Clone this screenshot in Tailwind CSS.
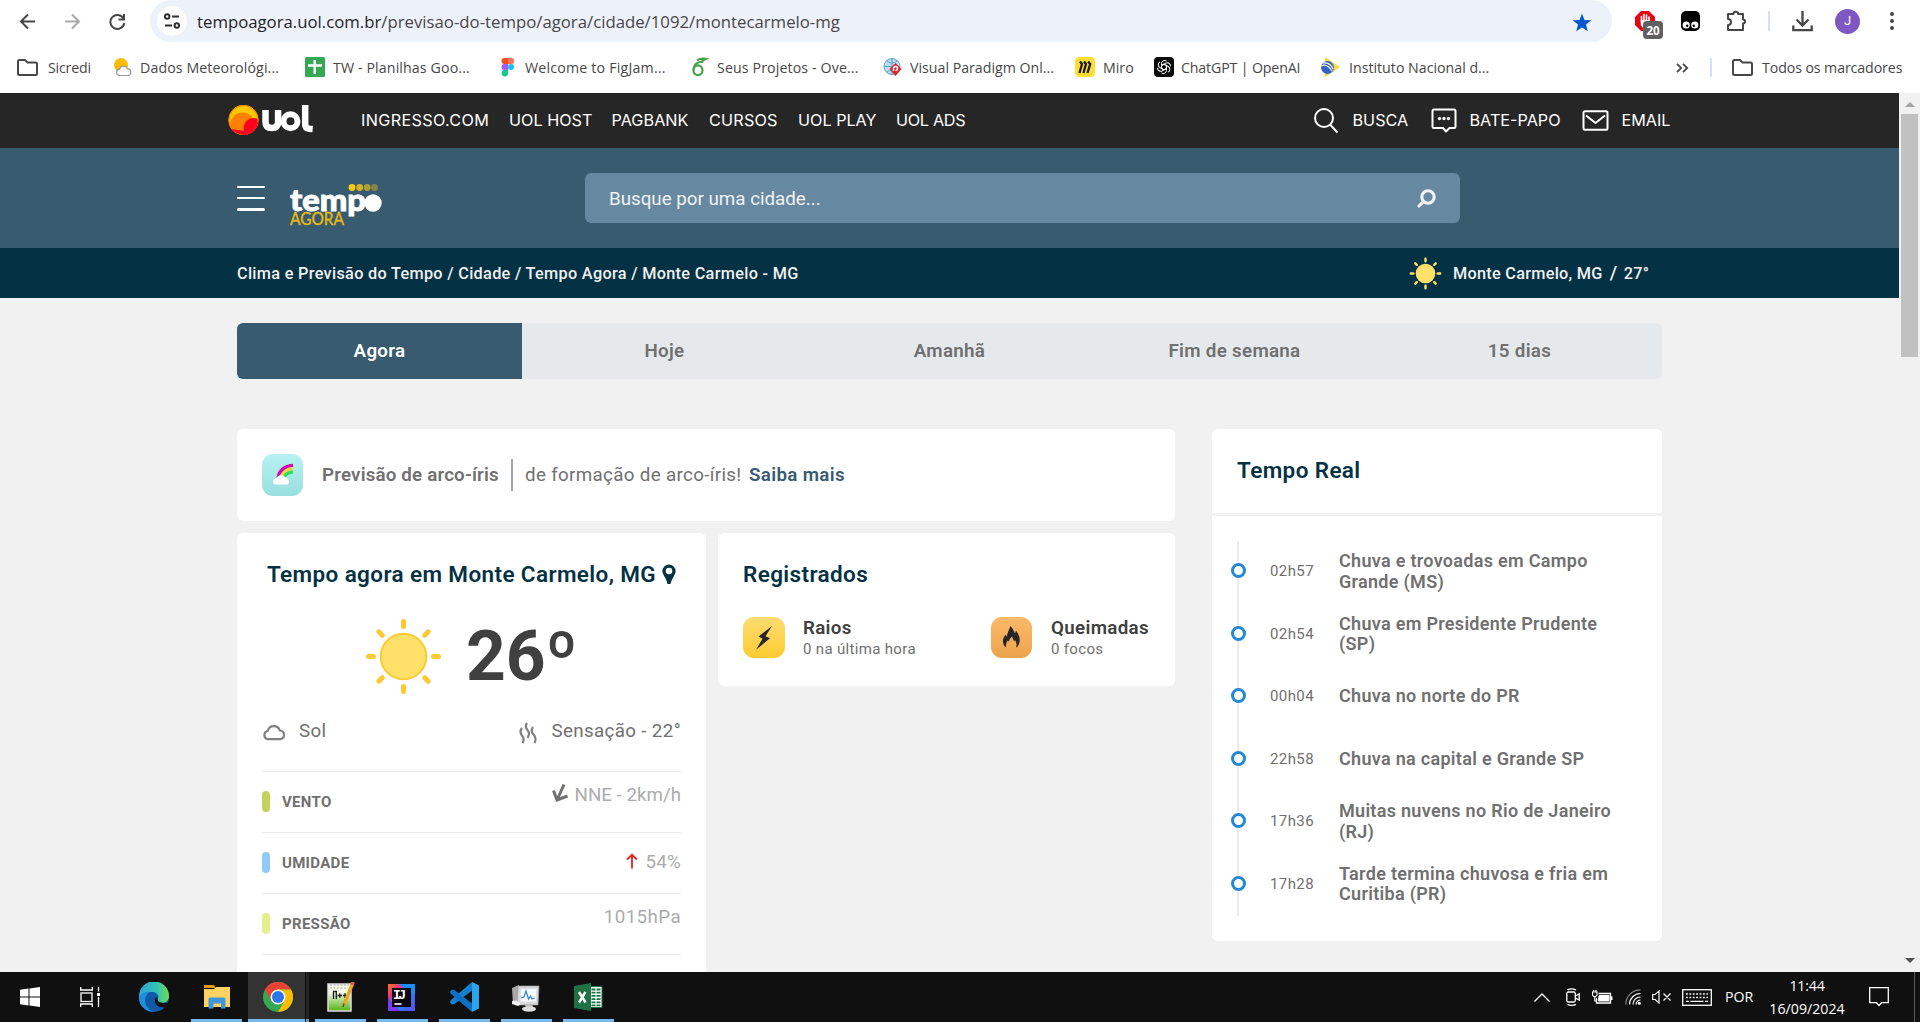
<!DOCTYPE html>
<html lang="pt-BR">
<head>
<meta charset="utf-8">
<title>Tempo Agora - Monte Carmelo</title>
<script src="https://cdn.jsdelivr.net/npm/@tailwindcss/browser@4"></script>
</head>
<body class="w-[1920px] h-[1022px] overflow-hidden bg-white font-['Roboto',sans-serif] flex flex-col">

<!-- Browser toolbar -->
<div class="h-[42px] shrink-0 flex items-start">
  <div class="w-[150px] h-[42px] flex items-center pl-[19px] gap-[28px] text-[#474747]">
    <svg class="w-[17px] h-[17px]" viewBox="0 0 17 17" fill="none" stroke="#474747" stroke-width="2"><path d="M16 8.500H2M9 1.500l-7 7 7 7"/></svg>
    <svg class="w-[17px] h-[17px]" viewBox="0 0 17 17" fill="none" stroke="#a9a9a9" stroke-width="2"><path d="M1 8.500h14M8 1.500l7 7-7 7"/></svg>
    <svg class="w-[17px] h-[17px]" viewBox="0 0 17 17" fill="none" stroke="#474747" stroke-width="2"><path d="M14.500 5.500A7 7 0 1 0 15.300 10M15 1v5.500H9.500"/></svg>
  </div>
  <div class="w-[1462px] h-[42px] rounded-[21px] bg-[#edf1fa] flex items-center pl-[7px] pr-[20px] font-['Open_Sans',sans-serif]">
    <div class="size-[30px] rounded-full bg-white flex items-center justify-center">
      <svg class="w-[16px] h-[16px]" viewBox="0 0 16 16" fill="none" stroke="#303030" stroke-width="2"><circle cx="3.200" cy="3.500" r="2.200"/><path d="M8 3.500h7M1 12.500h7"/><circle cx="12.800" cy="12.500" r="2.200"/></svg>
    </div>
    <div class="ml-[10px] mt-[2px] text-[16.75px] text-[#474747] whitespace-nowrap"><span class="text-[#1f1f1f]">tempoagora.uol.com.br</span>/previsao-do-tempo/agora/cidade/1092/montecarmelo-mg</div>
    <svg class="w-[20px] h-[20px] ml-auto mt-[3px]" viewBox="0 0 20 20" fill="#0b57d0"><path d="M10 .5l2.500 6.400 6.800.4-5.300 4.300 1.800 6.700L10 14.600l-5.800 3.700L6 11.600.7 7.300l6.800-.4z"/></svg>
  </div>
  <div class="flex-1 h-[42px] flex items-center pl-[22px] relative">
    <div class="w-[47px] h-[42px] relative">
      <svg class="w-[30px] h-[30px] mt-[10px]" viewBox="0 0 30 30"><path d="M7 1h8l6 6v8l-6 6H7l-6-6V7z" fill="#e30613"/><path d="M7.500 12V6.500M10 11V4.500M12.500 11V5M15 12V7" stroke="#fff" stroke-width="1.600" stroke-linecap="round"/><path d="M6.800 10h9v5l-3 3.500H9.500L6.800 15z" fill="#fff"/></svg>
      <div class="absolute left-[9px] top-[21px] w-[20px] h-[18px] rounded-[4px] bg-[#606060] text-white text-[11.5px] font-bold leading-[19px] text-center font-['Open_Sans',sans-serif]">20</div>
    </div>
    <svg class="w-[19px] h-[20px]" viewBox="0 0 19 20"><rect width="19" height="20" rx="5"/><circle cx="5.200" cy="14" r="3.600" fill="#fff"/><circle cx="13.800" cy="14" r="3.600" fill="#fff"/><circle cx="6.200" cy="14.800" r="1.200"/><circle cx="12.800" cy="14.800" r="1.200"/></svg>
    <svg class="w-[22px] h-[22px] ml-[26px]" viewBox="0 0 22 22" fill="none" stroke="#474747" stroke-width="2" stroke-linejoin="round"><path d="M2 4h5.500a2.300 2.300 0 0 1 4.600 0H17v5.500a2 2 0 0 1 0 4V20H2v-5a3 3 0 0 0 0-6z"/></svg>
    <div class="w-[2px] h-[20px] bg-[#d0e1fb] ml-[20px]"></div>
    <svg class="w-[21px] h-[21px] ml-[22px]" viewBox="0 0 21 21" fill="none" stroke="#474747" stroke-width="2.300"><path d="M10.500 0v14M4.500 8.500l6 6 6-6M1.300 14.500v4.700h18.400v-4.700"/></svg>
    <div class="size-[25px] rounded-full bg-[#7e57c2] text-white text-[13px] flex items-center justify-center ml-[22px]">J</div>
    <svg class="w-[6px] h-[18px] ml-[29px]" viewBox="0 0 6 18" fill="#474747"><circle cx="3" cy="2" r="2"/><circle cx="3" cy="9" r="2"/><circle cx="3" cy="16" r="2"/></svg>
  </div>
</div>

<!-- Bookmarks bar -->
<div class="h-[51px] shrink-0 flex items-center pl-[17px] font-['Open_Sans',sans-serif] text-[14.2px] text-[#474747] whitespace-nowrap">
  <div class="w-[96px] flex items-center">
    <div class="w-[31px]"><svg class="w-[21px] h-[17px]" viewBox="0 0 21 17" fill="none" stroke="#474747" stroke-width="2"><path d="M1 2.500Q1 1 2.500 1H8l2.500 2.500h8Q20 3.500 20 5v9.500Q20 16 18.500 16h-16Q1 16 1 14.500z"/></svg></div>
    <span class="tracking-[-0.2px]">Sicredi</span>
  </div>
  <div class="w-[192px] flex items-center">
    <div class="w-[27px]"><svg class="w-[20px] h-[20px]" viewBox="0 0 20 20"><circle cx="8" cy="8" r="7" fill="#fbbc04"/><path d="M6 18.500a3.200 3.200 0 0 1 .5-6.300 4.300 4.300 0 0 1 8-.5 3.500 3.500 0 0 1 1 6.800z" fill="#fff" stroke="#9a9a9a" stroke-width="1.200"/></svg></div>
    <span class="tracking-[0.1px]">Dados Meteorológi...</span>
  </div>
  <div class="w-[195px] flex items-center">
    <div class="w-[28px]"><svg class="w-[20px] h-[20px]" viewBox="0 0 20 20"><rect width="20" height="20" rx="1.500" fill="#34a853"/><path d="M9.700 3v14M3 8.500h14" stroke="#fff" stroke-width="2.400"/></svg></div>
    <span class="tracking-[0.12px]">TW - Planilhas Goo...</span>
  </div>
  <div class="w-[190px] flex items-center">
    <div class="w-[25px]"><svg class="w-[15px] h-[20px]" viewBox="0 0 15 20"><path d="M4.500 1H8v6H4.500a3 3 0 0 1 0-6z" fill="#f24e1e"/><path d="M8 1h3.200a3 3 0 0 1 0 6H8z" fill="#ff7262"/><path d="M4.500 7H8v6H4.500a3 3 0 0 1 0-6z" fill="#a259ff"/><circle cx="11" cy="10" r="3" fill="#1abcfe"/><path d="M4.500 13H8v3.500a3.200 3.200 0 1 1-3.500-3.500z" fill="#0acf83"/></svg></div>
    <span class="tracking-[0.2px]">Welcome to FigJam...</span>
  </div>
  <div class="w-[193px] flex items-center">
    <div class="w-[27px]"><svg class="w-[20px] h-[20px]" viewBox="0 0 20 20" fill="none" stroke="#46a247" stroke-width="2.200"><ellipse cx="8" cy="13.200" rx="4.500" ry="4.900"/><path d="M3.500 13C3.500 7.500 7 5 12.500 4.500M7 3.200q4-2 8.500-1.300Q12.500 3 11.500 6"/></svg></div>
    <span class="tracking-[0.12px]">Seus Projetos - Ove...</span>
  </div>
  <div class="w-[192px] flex items-center">
    <div class="w-[27px]"><svg class="w-[20px] h-[20px]" viewBox="0 0 20 20"><circle cx="9" cy="9.500" r="8" fill="#b9deef" stroke="#6b9db8"/><path d="M1.500 9.500h15M9 1.500v16M4 4q5 4 10 0M4 15q5-4 10 0" stroke="#5b9fc4" fill="none"/><path d="M12.500 6l6 6-6 7-6-7z" fill="#d8232a"/><path d="M10.500 14v-2.500a2 2 0 1 1 2 2" stroke="#fff" stroke-width="1.500" fill="none"/></svg></div>
    <span>Visual Paradigm Onl...</span>
  </div>
  <div class="w-[79px] flex items-center">
    <div class="w-[28px]"><svg class="w-[20px] h-[20px]" viewBox="0 0 20 20"><rect width="20" height="20" rx="4.500" fill="#ffdd33"/><path d="M5 4.500l2 2.500-2.500 9M9 4.500l2 2.500-2.500 9M13 4.500L15.200 7l-2.700 9" stroke="#1c1c1e" stroke-width="2.300" fill="none"/></svg></div>
    <span>Miro</span>
  </div>
  <div class="w-[166px] flex items-center">
    <div class="w-[27px]"><svg class="w-[20px] h-[20px]" viewBox="0 0 20 20"><rect width="20" height="20" rx="4" fill="#0a0a0a"/><g fill="none" stroke="#fff" stroke-width="1"><path d="M10 7.200l2.500 1.400v4.800a3.200 3.200 0 0 1-5 2.600"/><path d="M10 7.200l2.500 1.400v4.800a3.200 3.200 0 0 1-5 2.600" transform="rotate(60 10 10)"/><path d="M10 7.200l2.500 1.400v4.800a3.200 3.200 0 0 1-5 2.600" transform="rotate(120 10 10)"/><path d="M10 7.200l2.500 1.400v4.800a3.200 3.200 0 0 1-5 2.600" transform="rotate(180 10 10)"/><path d="M10 7.200l2.500 1.400v4.800a3.200 3.200 0 0 1-5 2.600" transform="rotate(240 10 10)"/><path d="M10 7.200l2.500 1.400v4.800a3.200 3.200 0 0 1-5 2.600" transform="rotate(300 10 10)"/></g></svg></div>
    <span class="tracking-[-0.15px]">ChatGPT | OpenAI</span>
  </div>
  <div class="w-[200px] flex items-center">
    <div class="w-[29px]"><svg class="w-[20px] h-[20px]" viewBox="0 0 20 20"><path d="M5 0l15 10L5 20z" fill="#fbd935"/><circle cx="7.500" cy="10.500" r="6.500" fill="#3a62c4"/><path d="M1 9q6-3 11 5M3 6q7-1 10 6" stroke="#fff" fill="none" stroke-width="1.100"/></svg></div>
    <span>Instituto Nacional d...</span>
  </div>
  <svg class="w-[13px] h-[10px] ml-[156px]" viewBox="0 0 13 10" fill="none" stroke="#474747" stroke-width="1.800"><path d="M1 .8L5.200 5 1 9.200M7 .8L11.200 5 7 9.200"/></svg>
  <div class="w-[2px] h-[19px] bg-[#d0e1fb] ml-[21px]"></div>
  <svg class="w-[21px] h-[17px] ml-[20px] mr-[9px]" viewBox="0 0 21 17" fill="none" stroke="#474747" stroke-width="2"><path d="M1 2.500Q1 1 2.500 1H8l2.500 2.500h8Q20 3.500 20 5v9.500Q20 16 18.500 16h-16Q1 16 1 14.500z"/></svg>
  <span class="tracking-[-0.1px]">Todos os marcadores</span>
</div>

<!-- Page viewport -->
<div class="h-[879px] shrink-0 flex">
  <div class="w-[1899px] bg-[#f1f1f1] flex flex-col overflow-hidden">

    <!-- UOL bar -->
    <div class="h-[55px] shrink-0 bg-[#262626] flex items-center pl-[228px] text-white font-['Inter',sans-serif] text-[16.2px]">
      <svg class="w-[88px] h-[34px] -mt-[2px]" viewBox="0 0 88 34">
        <defs><clipPath id="ball"><circle cx="15.500" cy="17" r="15"/></clipPath></defs>
        <g clip-path="url(#ball)"><rect width="32" height="34" fill="#ffc800"/><circle cx="14.500" cy="22" r="12.500" fill="#ff8000"/><circle cx="25.500" cy="25" r="10" fill="#ff0021"/></g><circle cx="15.500" cy="17" r="14.500" fill="none" stroke="#ff8000" stroke-width="1"/><path d="M29.800 19A14.500 14.500 0 0 1 17 31.400" fill="none" stroke="#ff0021" stroke-width="1.200"/><path d="M3 26Q8 31.500 18 32l-.5-4z" fill="#ff0021"/>
        <path d="M37.500 7v11.500q0 6.500 6.300 6.500t6.300-6.500V7" fill="none" stroke="#fff" stroke-width="6.500"/><circle cx="62.500" cy="18.200" r="7" fill="none" stroke="#fff" stroke-width="6"/><path d="M77.200 2v19.500q0 3.700 4 4.200l3.500.3" fill="none" stroke="#fff" stroke-width="6.500"/>
      </svg>
      <div class="flex items-center ml-[45px] h-[55px] whitespace-nowrap">
        <span class="w-[148px] tracking-[0.35px]">INGRESSO.COM</span><span class="w-[102.5px]">UOL HOST</span><span class="w-[97.500px] tracking-[0.05px]">PAGBANK</span><span class="w-[89px] tracking-[0.2px]">CURSOS</span><span class="w-[98px]">UOL PLAY</span><span class="w-[80.5px] tracking-[-0.3px]">UOL ADS</span>
      </div>
      <svg class="w-[26px] h-[26px] ml-[336px]" viewBox="0 0 26 26" fill="none" stroke="#fff" stroke-width="2"><circle cx="11" cy="10" r="9"/><path d="M17 16.500l7.500 8"/></svg>
      <span class="w-[78px] ml-[14px]">BUSCA</span>
      <svg class="w-[26px] h-[25px]" viewBox="0 0 26 25" fill="none" stroke="#fff" stroke-width="2" stroke-linejoin="round"><path d="M3 1.500h20q1.500 0 1.500 1.500v15.500q0 1.500-1.500 1.500h-4.500L15 23.500 12 20H3q-1.500 0-1.500-1.500V3Q1.500 1.500 3 1.500z"/><g fill="#fff" stroke="none"><circle cx="8.500" cy="10.500" r="1.700"/><circle cx="13" cy="10.500" r="1.700"/><circle cx="17.500" cy="10.500" r="1.700"/></g></svg>
      <span class="w-[112px] ml-[13px] whitespace-nowrap">BATE-PAPO</span>
      <svg class="w-[27px] h-[21px]" viewBox="0 0 27 21" fill="none" stroke="#fff" stroke-width="2" stroke-linejoin="round"><rect x="1.500" y="1.200" width="24" height="18.600" rx="1.500"/><path d="M4 5.500l9.500 7.500L23 5.500"/></svg>
      <span class="ml-[13px]">EMAIL</span>
    </div>

    <!-- Site header -->
    <div class="h-[100px] shrink-0 bg-[#385b70] flex items-center pl-[237px]">
      <div class="w-[28px] flex flex-col gap-[9px]"><div class="h-[2px] bg-white rounded"></div><div class="h-[2px] bg-white rounded"></div><div class="h-[3px] bg-white rounded"></div></div>
      <svg class="w-[94px] h-[46px] ml-[25px] mt-[13px]" viewBox="0 0 94 46">
        <circle cx="62" cy="5.500" r="3.400" fill="#fdc90d"/><circle cx="69.700" cy="5.500" r="3.400" fill="#fdc90d" opacity=".8"/><circle cx="77.200" cy="5.500" r="3.400" fill="#fdc90d" opacity=".6"/><circle cx="84.500" cy="5.500" r="3.400" fill="#fdc90d" opacity=".4"/>
        <text x="0" y="29" textLength="76" lengthAdjust="spacingAndGlyphs" fill="#fff" stroke="#fff" stroke-width=".9" font-family="Lato" font-weight="900" font-size="31">temp</text><circle cx="83" cy="21" r="8.700" fill="#fff"/>
        <text x="0" y="43" textLength="54" lengthAdjust="spacingAndGlyphs" fill="#e9bb14" stroke="#e9bb14" stroke-width=".35" font-family="Lato" font-weight="400" font-size="16.500">AGORA</text>
      </svg>
      <div class="w-[875px] h-[50px] ml-[201px] rounded-[6px] bg-[#6689a1] flex items-center justify-between pl-[24px] pr-[24px] text-[18.75px] text-[#f1f1f1]">
        <span class="mt-[2px]">Busque por uma cidade...</span>
        <svg class="w-[19px] h-[19px]" viewBox="0 0 19 19" fill="none" stroke="#f1f1f1" stroke-width="3.100" stroke-linecap="round"><circle cx="11" cy="8" r="6.200"/><path d="M6.200 12.800L2 17"/></svg>
      </div>
    </div>

    <!-- Breadcrumb -->
    <div class="h-[50px] pt-[2px] shrink-0 bg-[#043244] flex items-center pl-[237px] text-[16.25px] tracking-[0.31px] font-medium text-[#f1f1f1] whitespace-nowrap">
      <span class="w-[1172px]">Clima e Previsão do Tempo / Cidade / Tempo Agora / Monte Carmelo - MG</span>
      <svg class="w-[33px] h-[33px] -mt-[2px]" viewBox="0 0 33 33" stroke="#ffe16a" stroke-width="2.400" stroke-linecap="round"><circle cx="16.500" cy="16.500" r="9.800" fill="#ffe16a" stroke="none"/><path d="M16.500 1.800v2.500M16.500 28.700v2.500M1.800 16.500h2.500M28.700 16.500h2.500M6.300 6.300l1.500 1.500M25.200 25.200l1.500 1.500M6.300 26.700l1.500-1.500M25.200 7.800l1.500-1.500"/></svg>
      <span class="ml-[11px] tracking-[0.28px]">Monte Carmelo, MG</span><span class="ml-[7px] w-[14px] text-[19px] -mt-[2px]">/</span><span>27°</span>
    </div>

    <!-- Tabs -->
    <div class="mt-[25px] ml-[237px] w-[1425px] h-[56px] shrink-0 rounded-[6px] overflow-hidden bg-[#e5e9ec] grid grid-cols-5 text-[18.75px] tracking-[0.3px] font-semibold text-[#707070] text-center leading-[56px]">
      <div class="bg-[#385b70] text-white">Agora</div><div>Hoje</div><div>Amanhã</div><div>Fim de semana</div><div>15 dias</div>
    </div>

    <div class="mt-[50px] ml-[237px] flex gap-[37px] items-start">
      <!-- Left column -->
      <div class="w-[938px]">
        <div class="h-[92px] bg-white rounded-[6px] flex items-center pl-[25px] text-[18.75px] text-[#707070] whitespace-nowrap">
          <svg class="w-[41px] h-[42px]" viewBox="0 0 41 42"><defs><linearGradient id="g1" x1="0" y1="0" x2="0" y2="1"><stop stop-color="#b8f1f1"/><stop offset="1" stop-color="#98dfdf"/></linearGradient></defs><rect width="41" height="42" rx="11" fill="url(#g1)"/><g fill="none" stroke-width="3.200"><path d="M16 23.500q2-11 15-12.200" stroke="#d006b0"/><path d="M19.200 23.500q2-8 11.800-8.900" stroke="#f4d441"/><path d="M22 23.500q2-5 9-5.600" stroke="#2fdf5a"/></g><path d="M13 30.500a3.300 3.300 0 0 1 1.500-6.300 5 5 0 0 1 9-.7 4.300 4.300 0 0 1 2.500 7z" fill="#fff"/></svg>
          <span class="w-[178px] ml-[19px] font-semibold tracking-[0.17px]">Previsão de arco-íris</span>
          <div class="w-[2px] h-[32px] bg-[#a5a5a5] ml-[11px]"></div>
          <span class="w-[216px] ml-[12px] tracking-[0.34px]">de formação de arco-íris!</span>
          <span class="ml-[8px] tracking-[0.34px] font-semibold text-[#385b70]">Saiba mais</span>
        </div>
        <div class="flex gap-[12px] mt-[12px] items-start">
          <!-- Current conditions -->
          <div class="w-[469px] h-[460px] bg-white rounded-[6px] px-[25px] pt-[24px]">
            <div class="h-[36px] flex items-center justify-center gap-[6px] text-[22.5px] tracking-[0.38px] font-semibold text-[#043244] whitespace-nowrap">Tempo agora em Monte Carmelo, MG
              <svg class="w-[14px] h-[21px] -mt-[2px]" viewBox="0 0 14 21"><path fill="#043244" fill-rule="evenodd" d="M7 .5a6.600 6.600 0 0 1 6.600 6.600C13.600 11 10 14 8.500 20h-3C4.500 14 .4 11 .4 7.100A6.600 6.600 0 0 1 7 .5zm0 3.200a3.300 3.300 0 1 0 0 6.600 3.300 3.300 0 0 0 0-6.600z"/></svg>
            </div>
            <div class="h-[100px] mt-[13px] flex items-center pl-[103px]">
              <svg class="w-[77px] h-[77px]" viewBox="0 0 77 77" stroke="#ffc933" stroke-width="5" stroke-linecap="round"><circle cx="38.500" cy="38.500" r="22.800" fill="#ffe16a" stroke-width="2"/><path d="M38.500 3.500v5M38.500 68.500v5M3.500 38.500h5M68.500 38.500h5M13.800 13.800l3.500 3.500M59.700 59.700l3.500 3.500M13.800 63.200l3.500-3.500M59.700 17.300l3.500-3.500"/></svg>
              <span class="ml-[24px] mt-[2px] text-[69.500px] leading-[80px] font-bold text-[#404040]">26º</span>
            </div>
            <div class="flex items-center h-[44px] mt-[3px] text-[18.75px] tracking-[0.35px] text-[#707070]">
              <svg class="w-[24px] h-[17px] mt-[3px]" viewBox="0 0 24 17" fill="none" stroke="#808080" stroke-width="2.200"><path d="M5.500 15.200a4.400 4.400 0 0 1 .3-8.500 6.300 6.300 0 0 1 12-.2 4.400 4.400 0 0 1 .7 8.700z"/></svg>
              <span class="ml-[13px]">Sol</span>
              <svg class="w-[18px] h-[22px] ml-auto mt-[3px]" viewBox="0 0 18 22" fill="none" stroke="#808080" stroke-width="2.200"><path d="M3 6q-3 4 0 7.500T3.500 21M8 1q-2.500 3.500 .5 7t0 8M14 5q-3 4 .5 7.500T15.500 21"/></svg>
              <span class="ml-[15px]">Sensação - 22°</span>
            </div>
            <div class="mt-[18px] h-[61px] border-t border-[#ececec] flex items-start text-[#707070]">
              <div class="w-[8px] h-[21px] rounded-[4px] bg-[#c4d25e] mt-[19px]"></div>
              <span class="ml-[12px] mt-[19px] text-[15px] leading-[22px] font-bold tracking-[0.3px]">VENTO</span>
              <svg class="w-[18px] h-[20px] ml-auto mt-[11px]" viewBox="0 0 18 20" fill="none" stroke="#707070" stroke-width="3"><path d="M13 1.500L6.500 16M2.500 7.500L6 17l10.500-4"/></svg>
              <span class="ml-[6px] mt-[11px] text-[18.75px] leading-[24px] text-[#acacac]">NNE - 2km/h</span>
            </div>
            <div class="h-[61px] border-t border-[#ececec] flex items-start text-[#707070]">
              <div class="w-[8px] h-[21px] rounded-[4px] bg-[#90caf6] mt-[19px]"></div>
              <span class="ml-[12px] mt-[19px] text-[15px] leading-[22px] font-bold tracking-[0.3px]">UMIDADE</span>
              <svg class="w-[12px] h-[16px] ml-auto mt-[20px]" viewBox="0 0 12 16" fill="none" stroke="#e8201c" stroke-width="1.800"><path d="M6 15.500V2M1.200 6.500L6 1.700l4.800 4.800"/></svg>
              <span class="ml-[8px] mt-[17px] text-[18.75px] leading-[24px] tracking-[0.2px] text-[#acacac]">54%</span>
            </div>
            <div class="h-[61px] border-t border-[#ececec] flex items-start text-[#707070]">
              <div class="w-[8px] h-[21px] rounded-[4px] bg-[#e4f08c] mt-[19px]"></div>
              <span class="ml-[12px] mt-[19px] text-[15px] leading-[22px] font-bold tracking-[0.3px]">PRESSÃO</span>
              <span class="ml-auto mt-[11px] text-[18.75px] leading-[24px] tracking-[0.4px] text-[#acacac]">1015hPa</span>
            </div>
            <div class="h-[61px] border-t border-[#ececec]"></div>
          </div>
          <!-- Registered events -->
          <div class="w-[457px] h-[153px] bg-white rounded-[6px] px-[25px] pt-[24px]">
            <div class="h-[36px] flex items-center text-[22.5px] tracking-[0.38px] font-semibold text-[#043244]">Registrados</div>
            <div class="flex mt-[23px] whitespace-nowrap">
              <svg class="w-[42px] h-[42px]" viewBox="0 0 42 42"><defs><linearGradient id="g2" x1="0" y1="0" x2="0" y2="1"><stop stop-color="#fedc73"/><stop offset="1" stop-color="#ffcb30"/></linearGradient></defs><rect y="1" width="42" height="41" rx="11" fill="url(#g2)"/><path d="M29 10L15.500 20.500l4 2.200-6.500 11L27 22.200l-4.500-2z" fill="#262626"/></svg>
              <div class="ml-[18px] mt-[1px] w-[188px]"><div class="text-[18.75px] leading-[22px] font-semibold tracking-[0.3px] text-[#404040]">Raios</div><div class="text-[15px] leading-[20px] tracking-[0.33px] text-[#707070]">0 na última hora</div></div>
              <svg class="w-[41px] h-[42px]" viewBox="0 0 41 42"><defs><linearGradient id="g3" x1="0" y1="0" x2="0" y2="1"><stop stop-color="#fdb96a"/><stop offset="1" stop-color="#eba44c"/></linearGradient></defs><rect y="1" width="41" height="41" rx="11" fill="url(#g3)"/><path d="M15 31.500q-4.500-3.500-2.500-9.500l2-3.500.8 2.500Q17.500 14.500 19.500 10q3 3 4.500 7.500l1-3q5 7 3.300 12.500Q27.500 30.500 25 31.500q1.500-4-1-7.500l-1 1.500-2-5q-3 2.500-3 5l-1.300-1Q14.500 27.500 15 31.500z" fill="#262626"/></svg>
              <div class="ml-[19px] mt-[1px]"><div class="text-[18.75px] leading-[22px] font-semibold tracking-[0.33px] text-[#404040]">Queimadas</div><div class="text-[15px] leading-[20px] tracking-[0.33px] text-[#707070]">0 focos</div></div>
            </div>
          </div>
        </div>
      </div>

      <!-- Real-time news -->
      <div class="w-[450px] h-[512px] bg-white rounded-[6px]">
        <div class="h-[87px] border-b-[3px] border-[#f1f1f1] pl-[25px] flex items-center text-[22.5px] tracking-[0.38px] font-semibold text-[#043244]">Tempo Real</div>
        <div class="mt-[25px] ml-[25px] h-[375px] border-l-2 border-[#ececec] grid grid-rows-6 text-[18px] leading-[20.600px] tracking-[0.3px] font-semibold text-[#707070]">
          <div class="flex items-center pb-[1px]"><div class="size-[15px] rounded-full border-[3px] border-[#2389d6] bg-white -ml-[8px] -mt-[2px]"></div><span class="w-[69px] ml-[24px] text-[15px] tracking-[0.4px] font-normal">02h57</span><span class="w-[290px]">Chuva e trovoadas em Campo<br>Grande (MS)</span></div>
          <div class="flex items-center pb-[1px]"><div class="size-[15px] rounded-full border-[3px] border-[#2389d6] bg-white -ml-[8px] -mt-[2px]"></div><span class="w-[69px] ml-[24px] text-[15px] tracking-[0.4px] font-normal">02h54</span><span class="w-[290px]">Chuva em Presidente Prudente<br>(SP)</span></div>
          <div class="flex items-center pb-[1px]"><div class="size-[15px] rounded-full border-[3px] border-[#2389d6] bg-white -ml-[8px] -mt-[2px]"></div><span class="w-[69px] ml-[24px] text-[15px] tracking-[0.4px] font-normal">00h04</span><span class="w-[290px]">Chuva no norte do PR</span></div>
          <div class="flex items-center pb-[1px]"><div class="size-[15px] rounded-full border-[3px] border-[#2389d6] bg-white -ml-[8px] -mt-[2px]"></div><span class="w-[69px] ml-[24px] text-[15px] tracking-[0.4px] font-normal">22h58</span><span class="w-[290px]">Chuva na capital e Grande SP</span></div>
          <div class="flex items-center pb-[1px]"><div class="size-[15px] rounded-full border-[3px] border-[#2389d6] bg-white -ml-[8px] -mt-[2px]"></div><span class="w-[69px] ml-[24px] text-[15px] tracking-[0.4px] font-normal">17h36</span><span class="w-[290px]">Muitas nuvens no Rio de Janeiro<br>(RJ)</span></div>
          <div class="flex items-center pb-[1px]"><div class="size-[15px] rounded-full border-[3px] border-[#2389d6] bg-white -ml-[8px] -mt-[2px]"></div><span class="w-[69px] ml-[24px] text-[15px] tracking-[0.4px] font-normal">17h28</span><span class="w-[290px]">Tarde termina chuvosa e fria em<br>Curitiba (PR)</span></div>
        </div>
      </div>
    </div>
  </div>

  <!-- Scrollbar -->
  <div class="w-[21px] bg-[#f1f1f1] flex flex-col items-center">
    <svg class="w-[10px] h-[5px] mt-[9px]" viewBox="0 0 10 5" fill="#a3a3a3"><path d="M0 5l5-5 5 5z"/></svg>
    <div class="w-[17px] h-[243px] mt-[7px] bg-[#c1c1c1]"></div>
    <svg class="w-[10px] h-[5px] mt-auto mb-[9px]" viewBox="0 0 10 5" fill="#505050"><path d="M0 0l5 5 5-5z"/></svg>
  </div>
</div>

<!-- Taskbar -->
<div class="h-[50px] shrink-0 bg-[#101010] flex items-stretch text-white">
  <div class="w-[60px] flex items-center justify-center"><svg class="w-[20px] h-[20px]" viewBox="0 0 20 20" fill="#fff"><path d="M0 2.800L8.500 1.600V9.500H0zM9.500 1.500L20 0v9.500H9.500zM0 10.500h8.500v7.900L0 17.200zM9.500 10.500H20V20L9.500 18.500z"/></svg></div>
  <div class="w-[60px] flex items-center justify-center"><svg class="w-[20px] h-[20px]" viewBox="0 0 20 20" fill="none" stroke="#fff" stroke-width="1.300"><rect x="1" y="6" width="11" height="8.500"/><path d="M.7 0v3h11.600V0M.7 20v-3h11.600v3M18.500 0v4.500M18.500 10v10"/><path d="M17 6h3v3h-3z" fill="#fff" stroke="none"/></svg></div>
  <div class="w-[68px] flex items-center justify-center"><svg class="w-[30px] h-[30px]" viewBox="0 0 30 30"><defs><linearGradient id="e1" x1="0" y1=".3" x2="1" y2=".3"><stop stop-color="#2aa4dd"/><stop offset=".6" stop-color="#33c3b3"/><stop offset="1" stop-color="#6fdb55"/></linearGradient></defs><circle cx="15" cy="15" r="15" fill="#0f5aa8"/><path d="M0 14A15 15 0 0 1 30 14.500c0 4-3.500 6.500-7 6.500-4 0-6-1.500-4.500-3.500 2.500-4-1-7.500-5.500-7.500C6 10 1.500 12.500 0 17z" fill="url(#e1)"/><path d="M0 16C1 12 5.500 9.500 11 9.800 7 12 5 17 6.500 21.500 8 26.500 12 29.500 16 30 7 30.500 0 24 0 16z" fill="#1d8fdc"/><path d="M18.500 17.500q0 3.500 9.500 3.500l2-2v5l-2.500 1.500q-4 .5-8-1-4-2.500-3.500-7 0-1.500 1.500-2.500 1.500 1 1 2.500z" fill="#101010"/></svg></div>
  <div class="w-[57px] flex flex-col items-center"><div class="h-[47px] flex items-center pt-[3px]"><svg class="w-[26px] h-[24px]" viewBox="0 0 26 24"><path d="M0 0h10l1.500 3H0z" fill="#e09a0e"/><path d="M0 4h10l2-2h14v20H0z" fill="#ffd262"/><path d="M4.500 23.500V14q0-1.500 1.500-1.500h14q1.500 0 1.500 1.500v9.500h-4.500v-5h-7.500v5z" fill="#3f97dd"/></svg></div><div class="w-[51px] h-[3px] bg-[#76b9ed]"></div></div>
  <div class="w-[57px] ml-[3px] bg-[#333] flex flex-col"><div class="h-[47px] pt-[3px] pl-[3px] flex items-center justify-center"><svg class="w-[30px] h-[30px]" viewBox="0 0 30 30"><circle cx="15" cy="15" r="15" fill="#34a853"/><path d="M2 7.500A15 15 0 0 1 28 7.500H15L8.500 18.700z" fill="#ea4335"/><path d="M28 7.500A15 15 0 0 1 15 30l6.500-11.200L15 7.500z" fill="#fbbc05"/><circle cx="15" cy="15" r="7.500" fill="#fff"/><circle cx="15" cy="15" r="6" fill="#2a77ea"/></svg></div><div class="h-[3px] bg-[#76b9ed]"></div></div>
  <div class="w-[4px] bg-[#242424] flex flex-col justify-end border-l border-[#101010]"><div class="h-[3px] bg-[#649cc8]"></div></div>
  <div class="w-[51px] ml-[6px] flex flex-col"><div class="h-[47px] pt-[3px] flex items-center justify-center"><svg class="w-[28px] h-[30px]" viewBox="0 0 28 30"><defs><linearGradient id="n1" x1="0" y1="0" x2="0" y2="1"><stop offset=".3" stop-color="#f6fbe9"/><stop offset="1" stop-color="#52b110"/></linearGradient></defs><path d="M1 2h23v27H1z" fill="url(#n1)" stroke="#ddd" stroke-width="1.500"/><path d="M3 3h19M3 6h17" stroke="#aaa" stroke-dasharray="2 1.500"/><path d="M6.500 17V9.500h2.800V17M10.500 13.500h4.500M12.800 11.300v4.500M15.800 13.500h4.500M18 11.300v4.500" stroke="#222" stroke-width="1.400" fill="none"/><path d="M25.500 1.500L17 23" stroke="#e9a52c" stroke-width="3.500"/><path d="M26.200 0l-1 3" stroke="#d56060" stroke-width="3.500"/><path d="M17 21.500l-1 3.500" stroke="#553" stroke-width="1.500"/></svg></div><div class="h-[3px] bg-[#76b9ed]"></div></div>
  <div class="w-[51px] ml-[11px] flex flex-col"><div class="h-[47px] pt-[3px] pr-[2px] flex items-center justify-center"><svg class="w-[27px] h-[27px]" viewBox="0 0 27 27"><defs><linearGradient id="j1" x1="0" y1="0" x2="1" y2="1"><stop stop-color="#ff7a1a"/><stop offset=".25" stop-color="#f0307c"/><stop offset=".5" stop-color="#1e88f5"/><stop offset="1" stop-color="#5c4ff0"/></linearGradient></defs><rect width="27" height="27" fill="url(#j1)"/><path d="M10 0h17v10z" fill="#1a8cf8"/><path d="M0 14v13h12z" fill="#7a3cf0"/><rect x="4" y="4" width="19" height="19" fill="#090410"/><path d="M6.500 20h7" stroke="#fff" stroke-width="1.600"/><text x="5" y="14.500" font-family="Liberation Mono" font-weight="700" font-size="13" fill="#fff" textLength="13">IJ</text></svg></div><div class="h-[3px] bg-[#76b9ed]"></div></div>
  <div class="w-[51px] ml-[11px] flex flex-col"><div class="h-[47px] pt-[3px] flex items-center justify-center"><svg class="w-[30px] h-[30px]" viewBox="0 0 30 30"><path d="M22 0l7 3.500V26.500L22 30z" fill="#2aa5ee"/><path d="M22 0v8.500L4.500 22 2 22.500 0 20.500l.5-2z" fill="#1481cf"/><path d="M22 30v-8.500L4.500 8 2 7.500 0 9.500l.5 2z" fill="#0f6fc0"/></svg></div><div class="h-[3px] bg-[#76b9ed]"></div></div>
  <div class="w-[51px] ml-[11px] flex flex-col"><div class="h-[47px] pt-[4px] pr-[2px] flex items-center justify-center"><svg class="w-[30px] h-[28px]" viewBox="0 0 30 28"><path d="M1 4l7-3v20l-6-1z" fill="#a8a8a8"/><path d="M7 2h21l-1 19H6z" fill="#d8d8d8" stroke="#999" stroke-width=".7"/><path d="M10 5h15.500l-.7 12.500H9.500z" fill="#f7fbff"/><path d="M10 14l3-1 2-6 2.500 8 2-3 1.500 3 3-1" fill="none" stroke="#3b84c4" stroke-width="1.300"/><path d="M13 20h8l1 3h-7z" fill="#bbb"/><ellipse cx="18" cy="25" rx="7" ry="2.700" fill="#ddd"/><path d="M1 17q5-2 9 3l-3 2-6-2z" fill="#eee"/></svg></div><div class="h-[3px] bg-[#76b9ed]"></div></div>
  <div class="w-[51px] ml-[11px] flex flex-col"><div class="h-[47px] pt-[3px] flex items-center justify-center"><svg class="w-[29px] h-[28px]" viewBox="0 0 29 28"><path d="M15 3.500h13v21H15z" fill="#fff" stroke="#1f7244"/><path d="M17.500 6.500h9M17.500 9.700h9M17.500 12.900h9M17.500 16.100h9M17.500 19.300h9M17.500 22.300h9" stroke="#1f7244" stroke-width="1.800" stroke-dasharray="4 1"/><path d="M0 3L17 0v28L0 25z" fill="#1f7244"/><path d="M5 9l6.500 10.500M11.500 9L5 19.500" stroke="#fff" stroke-width="2.400"/></svg></div><div class="h-[3px] bg-[#76b9ed]"></div></div>

  <!-- System tray -->
  <div class="ml-auto w-[386px] flex items-center font-['Open_Sans',sans-serif]">
    <svg class="w-[16px] h-[9px]" viewBox="0 0 16 9" fill="none" stroke="#fff" stroke-width="1.300"><path d="M.5 8.500L8 1l7.500 7.500"/></svg>
    <svg class="w-[14px] h-[18px] ml-[16px]" viewBox="0 0 14 18" fill="none" stroke="#fff" stroke-width="1.300"><rect x=".8" y="4" width="8.500" height="10" rx="1.500"/><path d="M9.500 8l3.700-2.200v6.400L9.500 10M1.500 1.800q4-2 8.500 0M1.500 16.300q4 2 8.500 0"/></svg>
    <svg class="w-[21px] h-[14px] ml-[12px]" viewBox="0 0 21 14"><path d="M6.500 3.500h12v9.500h-14v-5" fill="none" stroke="#fff" stroke-width="1.300"/><path d="M7 5h10.500v6.500H6V8zM19 6.500h1.500v3.500H19z" fill="#fff"/><path d="M.5 2h4.500v3L3.800 6.500H1.700L.5 5zM1.700 0v2M4 0v2M2.800 6v5H5" fill="none" stroke="#fff" stroke-width="1.100"/></svg>
    <svg class="w-[16px] h-[16px] ml-[12px]" viewBox="0 0 16 16" fill="none" stroke="#fff" stroke-width="1.200"><path d="M.8 15.500A14.700 14.700 0 0 1 15.500.8" stroke="#888"/><path d="M4.500 15.500a11 11 0 0 1 11-11M8 15.500A7.500 7.500 0 0 1 15.500 8M11 15.500a4.500 4.500 0 0 1 4.500-4.500"/><circle cx="14.300" cy="14.300" r="1.500" fill="#fff" stroke="none"/></svg>
    <svg class="w-[19px] h-[14px] ml-[11px]" viewBox="0 0 19 14" fill="none" stroke="#fff" stroke-width="1.200"><path d="M.7 4.500h2.500L7 1v12L3.200 9.500H.7zM11.500 3.500l7 7M18.500 3.500l-7 7"/></svg>
    <svg class="w-[30px] h-[17px] ml-[11px]" viewBox="0 0 30 17" fill="none" stroke="#fff" stroke-width="1.300"><rect x=".7" y=".7" width="28.600" height="15.600"/><path d="M4 5h22M4 8.500h22" stroke-dasharray="1.800 1.600"/><path d="M4 12.300h3M8.500 12.300h13M23 12.300h3"/></svg>
    <span class="ml-[13px] w-[28px] text-[14.2px]">POR</span>
    <div class="ml-[14px] w-[80px] text-center text-[14.2px] leading-[23px]"><div class="tracking-[-0.2px]">11:44</div><div class="whitespace-nowrap">16/09/2024</div></div>
    <svg class="w-[20px] h-[20px] ml-[22px]" viewBox="0 0 20 20" fill="none" stroke="#fff" stroke-width="1.300"><path d="M.7.700h18.600v15H12.500L10 18.500 7.500 15.700H.7z"/></svg>
    <div class="w-px h-[50px] bg-[#5a5a5a] ml-auto mr-[5px]"></div>
  </div>
</div>
</body>
</html>
